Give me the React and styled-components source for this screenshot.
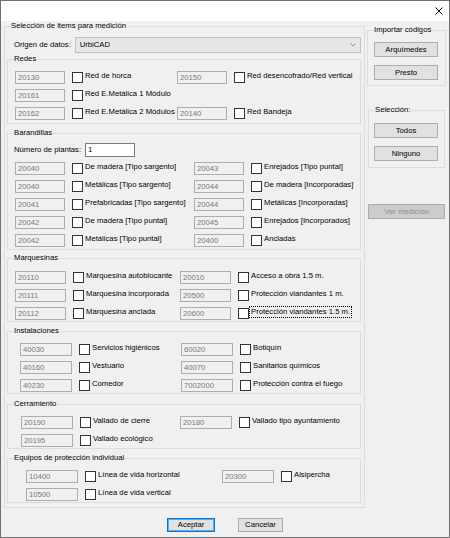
import React from "react"
import styled, { createGlobalStyle } from "styled-components"

const Global = createGlobalStyle`
  html, body { margin: 0; padding: 0; background: #fff; }
  * { box-sizing: border-box; }
`

const Window = styled.div`
  width: 450px;
  height: 538px;
  border: 1px solid #707070;
  background: #f0f0f0;
  display: flex;
  flex-direction: column;
  color: #000;
  font-family: "Liberation Sans", Arial, sans-serif;
  font-size: 7.7px;
  line-height: 10px;
`
const TitleBar = styled.div`
  height: 20px;
  background: #fff;
  display: flex;
  align-items: center;
  justify-content: flex-end;
  padding-right: 6px;
`
const Main = styled.div`
  display: flex;
  align-items: flex-start;
  padding-left: 3px;
  gap: 2px;
`
const Group = styled.fieldset`
  margin: ${({ $top }) => $top || 0}px 0 0 ${({ $left }) => $left || 0}px;
  padding: 0;
  min-width: 0;
  width: ${({ $w }) => $w}px;
  border: 1px solid #dcdcdc;
`
const Legend = styled.legend`
  margin-left: 5px;
  padding: 0 1px;
  height: 10px;
  line-height: 10px;
`
const Inner = styled.div`
  padding: ${({ $pad }) => $pad};
  display: flex;
  flex-direction: column;
`
const SourceRow = styled.div`
  display: flex;
  align-items: center;
  height: 16px;
  padding-left: 7px;
`
const SourceLabel = styled.span`
  width: 61px;
`
const Select = styled.div`
  width: 288px;
  height: 16px;
  border: 1px solid #c2c2c2;
  background: #e6e6e6;
  display: flex;
  align-items: center;
  justify-content: space-between;
  padding: 0 4px 0 4px;
`
const Rows = styled.div`
  display: grid;
  grid-template-columns: ${({ $span }) => $span}px auto;
  row-gap: 5px;
  padding-left: ${({ $left }) => $left}px;
`
const ItemRow = styled.div`
  display: flex;
  align-items: flex-start;
  height: 13px;
`
const Code = styled.div`
  width: ${({ $w }) => $w}px;
  height: 13px;
  border: 1px solid #adadad;
  background: #f0f0f0;
  color: #7a7a7a;
  padding-left: 2px;
  line-height: 11px;
  flex: none;
`
const Check = styled.span`
  width: 11px;
  height: 11px;
  margin: 1px 0 0 7px;
  border: 1px solid #333;
  background: #fff;
  flex: none;
`
const ItemLabel = styled.span`
  margin: 0 0 0 1px;
  padding: 0 1px;
  white-space: nowrap;
  outline: ${({ $focus }) => ($focus ? "1px dotted #000" : "none")};
  outline-offset: 0;
`
const PlantsRow = styled.div`
  display: flex;
  align-items: center;
  height: 14px;
  padding-left: 6px;
  margin-bottom: 5px;
`
const PlantsLabel = styled.span`
  width: 71px;
`
const NumberBox = styled.div`
  width: 50px;
  height: 14px;
  border: 1px solid #7a7a7a;
  background: #fff;
  padding-left: 2px;
  line-height: 12px;
`
const Side = styled.div`
  display: flex;
  flex-direction: column;
  width: 79px;
`
const Button = styled.div`
  width: ${({ $w }) => $w}px;
  height: ${({ $h }) => $h || 15}px;
  margin-top: ${({ $mt }) => $mt || 0}px;
  margin-left: ${({ $ml }) => $ml || 0}px;
  border: 1px solid ${({ $default }) => ($default ? "#0078d7" : "#adadad")};
  box-shadow: ${({ $default }) => ($default ? "inset 0 0 0 1px #6aaae6" : "none")};
  background: ${({ $disabled }) => ($disabled ? "#cccccc" : "#e1e1e1")};
  color: ${({ $disabled }) => ($disabled ? "#8d8d8d" : "#000")};
  display: flex;
  align-items: center;
  justify-content: center;
  flex: none;
`
const Footer = styled.div`
  display: flex;
  justify-content: center;
  gap: 23px;
  padding-top: 10px;
`

const CloseIcon = () => (
  <svg width="8" height="8" viewBox="0 0 8 8">
    <path d="M0.5 0.5 L7.5 7.5 M7.5 0.5 L0.5 7.5" stroke="#000" strokeWidth="1" />
  </svg>
)

const Chevron = () => (
  <svg width="6" height="4" viewBox="0 0 6 4">
    <path d="M0.5 0.5 L3 3 L5.5 0.5" fill="none" stroke="#8a8a8a" strokeWidth="1" />
  </svg>
)

const Item = ({ code, label, w, focus }) =>
  code ? (
    <ItemRow>
      <Code $w={w}>{code}</Code>
      <Check />
      <ItemLabel $focus={focus}>{label}</ItemLabel>
    </ItemRow>
  ) : (
    <ItemRow />
  )

const Section = ({ title, top, pad, left, span, w, items }) => (
  <Group $top={top} $w={354}>
    <Legend>{title}</Legend>
    <Inner $pad={pad}>
      <Rows $left={left} $span={span}>
        {items.map((it, i) => (
          <Item key={i} code={it[0]} label={it[1]} focus={it[2]} w={w} />
        ))}
      </Rows>
    </Inner>
  </Group>
)

const redes = [
  ["20130", "Red de horca"], ["20150", "Red desencofrado/Red vertical"],
  ["20161", "Red E.Metálica 1 Módulo"], [],
  ["20162", "Red E.Metálica 2 Módulos"], ["20140", "Red Bandeja"],
]

const barandillas = [
  ["20040", "De madera [Tipo sargento]"], ["20043", "Enrejados [Tipo puntal]"],
  ["20040", "Metálicas [Tipo sargento]"], ["20044", "De madera [Incorporadas]"],
  ["20041", "Prefabricadas [Tipo sargento]"], ["20044", "Metálicas [Incorporadas]"],
  ["20042", "De madera [Tipo puntal]"], ["20045", "Enrejados [Incorporados]"],
  ["20042", "Metálicas [Tipo puntal]"], ["20400", "Ancladas"],
]

const marquesinas = [
  ["20110", "Marquesina autoblocante"], ["20010", "Acceso a obra 1.5 m."],
  ["20111", "Marquesina incorporada"], ["20500", "Protección viandantes 1 m."],
  ["20112", "Marquesina anclada"], ["20600", "Protección viandantes 1.5 m.", true],
]

const instalaciones = [
  ["40030", "Servicios higiénicos"], ["60020", "Botiquín"],
  ["40160", "Vestuario"], ["40070", "Sanitarios químicos"],
  ["40230", "Comedor"], ["7002000", "Protección contra el fuego"],
]

const cerramiento = [
  ["20190", "Vallado de cierre"], ["20180", "Vallado tipo ayuntamiento"],
  ["20195", "Vallado ecológico"], [],
]

const equipos = [
  ["10400", "Línea de vida horizontal"], ["20300", "Alsipercha"],
  ["10500", "Línea de vida vertical"], [],
]

export default function App() {
  return (
    <>
      <Global />
      <Window>
        <TitleBar>
          <CloseIcon />
        </TitleBar>
        <Main>
          <Group $w={361}>
            <Legend>Selección de items para medición</Legend>
            <Inner $pad="6px 3px 4px 2px">
              <SourceRow>
                <SourceLabel>Origen de datos:</SourceLabel>
                <Select>
                  <span>UrbiCAD</span>
                  <Chevron />
                </Select>
              </SourceRow>

              <Section title="Redes" top={1} pad="7px 0 3px" left={7} span={162} w={50} items={redes} />

              <Group $top={4} $w={354}>
                <Legend>Barandillas</Legend>
                <Inner $pad="5px 0 2px">
                  <PlantsRow>
                    <PlantsLabel>Número de plantas:</PlantsLabel>
                    <NumberBox>1</NumberBox>
                  </PlantsRow>
                  <Rows $left={7} $span={179}>
                    {barandillas.map((it, i) => (
                      <Item key={i} code={it[0]} label={it[1]} w={50} />
                    ))}
                  </Rows>
                </Inner>
              </Group>

              <Section title="Marquesinas" top={3} pad="8px 0 1px" left={7} span={165} w={51} items={marquesinas} />
              <Section title="Instalaciones" top={4} pad="7px 0 1px" left={12} span={161} w={52} items={instalaciones} />
              <Section title="Cerramiento" top={5} pad="7px 0 1px" left={13} span={159} w={52} items={cerramiento} />
              <Section title="Equipos de protección individual" top={4} pad="7px 0 1px" left={18} span={196} w={52} items={equipos} />
            </Inner>
          </Group>

          <Side>
            <Group $top={4} $w={79}>
              <Legend>Importar códigos</Legend>
              <Inner $pad="7px 0 5px 6px">
                <Button $w={64}>Arquímedes</Button>
                <Button $w={64} $mt={8}>Presto</Button>
              </Inner>
            </Group>
            <Group $top={19} $left={1} $w={77}>
              <Legend>Selección:</Legend>
              <Inner $pad="8px 0 6px 5px">
                <Button $w={64}>Todos</Button>
                <Button $w={64} $mt={8}>Ninguno</Button>
              </Inner>
            </Group>
            <Button $w={77} $mt={36} $ml={1} $disabled>Ver medición</Button>
          </Side>
        </Main>
        <Footer>
          <Button $w={48} $h={14} $default>Aceptar</Button>
          <Button $w={45} $h={14}>Cancelar</Button>
        </Footer>
      </Window>
    </>
  )
}
